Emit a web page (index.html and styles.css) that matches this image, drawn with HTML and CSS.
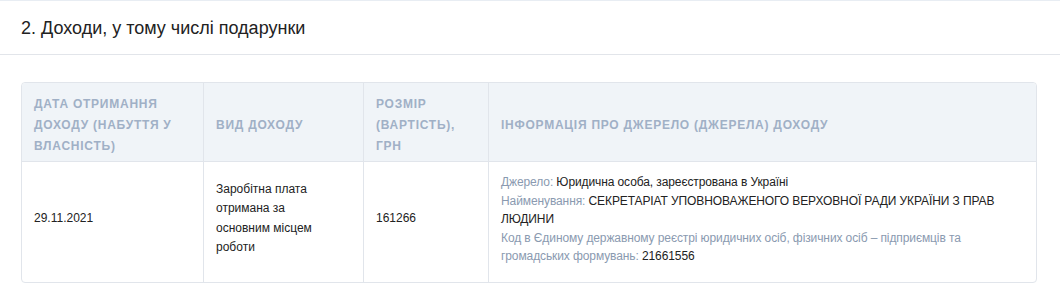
FILE: index.html
```html
<!DOCTYPE html>
<html lang="uk">
<head>
<meta charset="utf-8">
<link rel="stylesheet" href="styles.css">
</head>
<body>
<section class="card">
  <h2 class="card-title">2. Доходи, у тому числі подарунки</h2>
  <div class="card-body">
    <table class="income">
      <thead>
        <tr>
          <th class="c1">Дата отримання доходу (набуття у власність)</th>
          <th class="c2">Вид доходу</th>
          <th class="c3">Розмір (вартість), грн</th>
          <th class="c4">Інформація про джерело (джерела) доходу</th>
        </tr>
      </thead>
      <tbody>
        <tr>
          <td>29.11.2021</td>
          <td class="kind"><div class="kind-text">Заробітна плата отримана за основним місцем роботи</div></td>
          <td>161266</td>
          <td class="info">
            <div><span class="lbl">Джерело:</span> Юридична особа, зареєстрована в Україні</div>
            <div><span class="lbl">Найменування:</span> СЕКРЕТАРІАТ УПОВНОВАЖЕНОГО ВЕРХОВНОЇ РАДИ УКРАЇНИ З ПРАВ ЛЮДИНИ</div>
            <div><span class="lbl">Код в Єдиному державному реєстрі юридичних осіб, фізичних осіб – підприємців та громадських формувань:</span> 21661556</div>
          </td>
        </tr>
      </tbody>
    </table>
  </div>
</section>
</body>
</html>
```

FILE: styles.css
```css
html, body {
  margin: 0;
  padding: 0;
  background: #ffffff;
  font-family: "Liberation Sans", Arial, sans-serif;
  color: #222222;
}

.card {
  border-top: 1px solid #e8edf3;
  background: #ffffff;
}

.card-title {
  margin: 0;
  padding: 16px 21px 0 21px;
  height: 37px;
  font-size: 18px;
  font-weight: normal;
  line-height: 23px;
  color: #222222;
  border-bottom: 1px solid #e2e5ea;
}

.card-body {
  padding: 27px 23px 16px 21px;
}

.income {
  width: 100%;
  border-collapse: separate;
  border-spacing: 0;
  border: 1px solid #e1e5eb;
  border-radius: 4px;
  table-layout: fixed;
}

.income th {
  background: #f0f4f8;
  color: #a0b0c6;
  font-size: 12px;
  font-weight: bold;
  text-transform: uppercase;
  letter-spacing: 0.75px;
  text-align: left;
  line-height: 21px;
  padding: 11px 12px 4px 12px;
  vertical-align: middle;
  border-bottom: 1px solid #e1e5eb;
  border-left: 1px solid #e1e5eb;
}

.income th:first-child {
  border-left: none;
  border-top-left-radius: 4px;
}

.income th:last-child {
  border-top-right-radius: 4px;
}

.income .c1 { width: 157px; }
.income .c2 { width: 135px; }
.income .c3 { width: 100px; }

.income td {
  font-size: 12px;
  line-height: 19px;
  padding: 10px 12px 16px 12px;
  vertical-align: middle;
  border-left: 1px solid #e1e5eb;
  color: #222222;
}

.income td:first-child {
  border-left: none;
}

.kind-text {
  max-width: 110px;
  line-height: 19.5px;
}

.income td.info {
  line-height: 18.5px;
  letter-spacing: -0.1px;
  padding-top: 11px;
  padding-bottom: 16px;
}

.lbl {
  color: #8a9ab0;
}
```
